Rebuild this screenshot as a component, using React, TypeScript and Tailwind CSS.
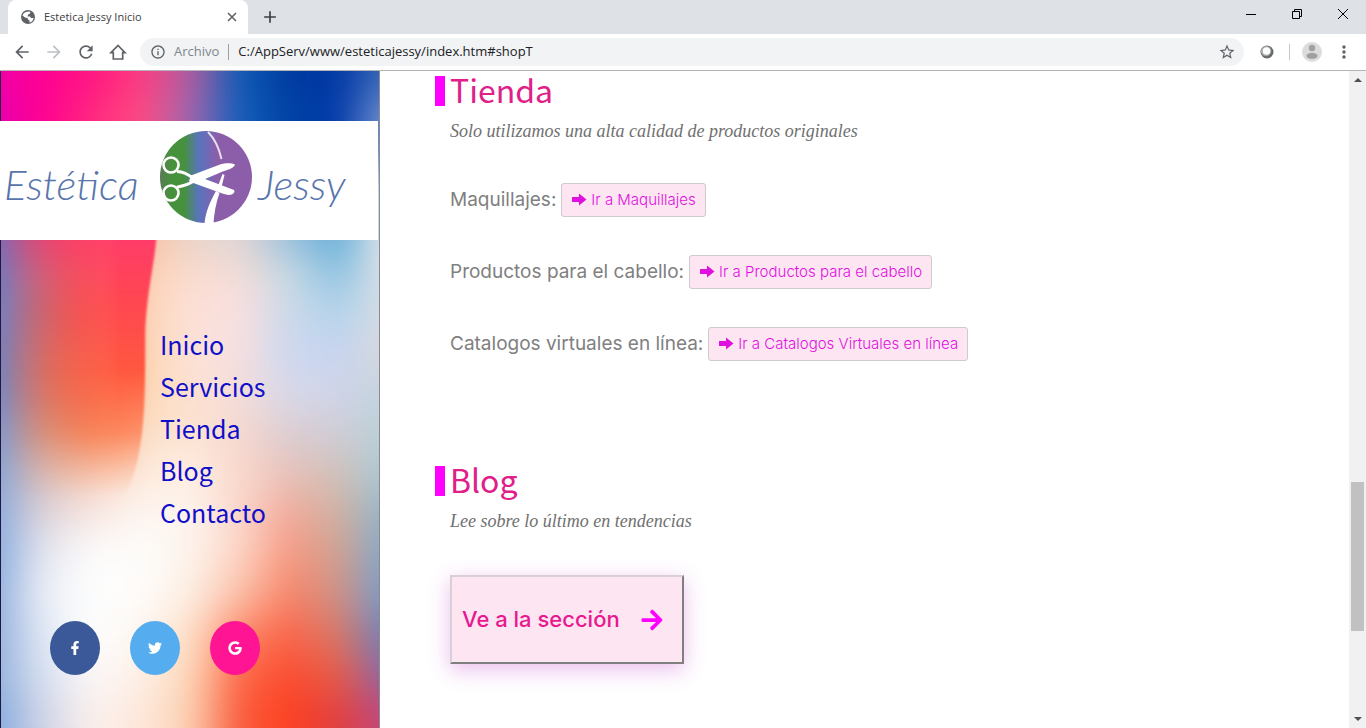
import type { ReactNode } from "react";
import {
  MdAdd,
  MdArrowBack,
  MdArrowForward,
  MdClose,
  MdInfoOutline,
  MdMoreVert,
  MdRefresh,
  MdStarBorder,
} from "react-icons/md";
import { FaArrowRight, FaFacebookF, FaGoogle, FaTwitter } from "react-icons/fa";

const heading = "font-['Noto_Sans_CJK_SC','Noto_Sans',sans-serif]";
const script = "font-['Liberation_Serif',serif] italic";

/* Horizontal colour bands, blended into each other by the blur filter. */
const bands: [number, number, string][] = [
  [-60, 85, "f000a8 ff0094 ff1480 ff3c80 b060a0 0c5cb8 003a9e 0036a4 3a6cb8"],
  [25, 70, "e400b4 ff0090 ff2a80 ff4c80 a068b0 1460bc 0042a4 0038a8 7c98d4"],
  [95, 90, "7a6ab8 d84a78 ff4060 fdc0a0 e8d4c8 e0d6d6 9cc0dc 60acd8 e8e8ea"],
  [185, 40, "7078c0 b87088 e8605c fdd0b0 fbdcd0 f4dcd8 c8dae4 90c4e2 e0e2e8"],
  [225, 40, "7480c4 b07484 e8604c fdd5b4 fce0d8 fae0e0 ccd8ea b4d4ec d8dce4"],
  [265, 40, "7080c0 c07878 e87058 fdd5b0 fde2d8 f6dfe0 ccd8f0 c8d4f0 d8d8dc"],
  [305, 40, "7088c8 c88078 ee7858 fdd8b4 fde2d0 f4dcd8 d8d8e8 d0d4e8 c0d4dc"],
  [345, 40, "7c98d0 cc9c90 f09870 fbe0c8 fde4d4 f6d8d0 dcccd0 d0ccd4 b8d0d8"],
  [385, 40, "84a4d8 d8bcb8 f8ccb8 fdeadc fef0e4 fbd8cc e8c0b8 d0c0b8 a8c8d4"],
  [425, 40, "88a8dc dcd4dc f8e8e4 fdf6f2 fdf4ee fbd8cc f4a898 d0b0a0 90b4cc"],
  [465, 40, "84a8dc e4e6f0 fdfcfc fdfdfb fdf4ec fcd4c4 f89880 d0a090 80a8cc"],
  [505, 40, "8cacdc eceef6 fefefe fefcfa fdeee2 fbc0a8 f88468 d09084 749ccc"],
  [545, 40, "90acdc e0e8f4 fefefe fdf6f0 fde0c8 fc8868 fc6448 d87868 6c80bc"],
  [585, 40, "90b0dc d8e0f0 fcf8f8 fdf0e8 fdd8b8 fc6848 fb4c30 e85c48 8868ac"],
  [625, 120, "80a8dc d0d4e8 fbf0ec fde8dc fcd0b0 f85c3c ff4020 e04040 c04880"],
];

function Wallpaper() {
  return (
    <svg
      className="absolute inset-0 size-full"
      viewBox="0 0 380 658"
      preserveAspectRatio="none"
      aria-hidden="true"
    >
      <defs>
        {bands.map(([y, , colours]) => (
          <linearGradient key={y} id={`band${y}`} gradientUnits="userSpaceOnUse" x1="-8" x2="388" y1="0" y2="0">
            {colours.split(" ").map((c, i) => (
              <stop key={i} offset={i / 8} stopColor={`#${c}`} />
            ))}
          </linearGradient>
        ))}
        <filter
          id="blend"
          filterUnits="userSpaceOnUse"
          x="-60"
          y="-60"
          width="500"
          height="800"
          colorInterpolationFilters="sRGB"
        >
          <feGaussianBlur stdDeviation="15 18" />
        </filter>
        <linearGradient id="flame" gradientUnits="userSpaceOnUse" x1="0" x2="0" y1="170" y2="430">
          <stop offset="0" stopColor="#ff3c68" />
          <stop offset="0.25" stopColor="#ff4850" />
          <stop offset="0.5" stopColor="#ff5840" />
          <stop offset="0.75" stopColor="#ff6c3c" />
          <stop offset="1" stopColor="#fba070" />
        </linearGradient>
        <linearGradient id="fadeX" x1="0" x2="1" y1="0" y2="0">
          <stop offset="0.03" stopColor="#000" />
          <stop offset="0.7" stopColor="#fff" />
        </linearGradient>
        <linearGradient id="fadeY" gradientUnits="userSpaceOnUse" x1="0" x2="0" y1="300" y2="425">
          <stop offset="0" stopColor="#000" stopOpacity="0" />
          <stop offset="0.5" stopColor="#000" stopOpacity="0.35" />
          <stop offset="1" stopColor="#000" />
        </linearGradient>
        <mask id="fade" maskUnits="userSpaceOnUse" x="0" y="110" width="170" height="340">
          <rect x="0" y="110" width="170" height="340" fill="url(#fadeX)" />
          <rect x="0" y="110" width="170" height="340" fill="url(#fadeY)" />
        </mask>
        <filter id="soft" x="-10%" width="120%" colorInterpolationFilters="sRGB">
          <feGaussianBlur stdDeviation="1" />
        </filter>
      </defs>
      <g filter="url(#blend)">
        {bands.map(([y, h]) => (
          <rect key={y} x="-60" y={y} width="500" height={h + 1} fill={`url(#band${y})`} />
        ))}
      </g>
      <g mask="url(#fade)">
        <path
          d="M-20 100H158L156 170C153 200 146 225 145 265C145 310 145 345 140 375C136 400 130 415 118 440H-20Z"
          fill="url(#flame)"
          filter="url(#soft)"
        />
      </g>
    </svg>
  );
}

function LogoMark() {
  return (
    <svg className="h-24 w-24 shrink-0" viewBox="0 0 96 96" aria-hidden="true">
      <defs>
        <linearGradient id="logoFill" x1="0" x2="1" y1="0" y2="0">
          <stop offset="0" stopColor="#5a7a58" />
          <stop offset="0.12" stopColor="#46923c" />
          <stop offset="0.26" stopColor="#46923c" />
          <stop offset="0.42" stopColor="#5874bc" />
          <stop offset="0.5" stopColor="#6a6cb8" />
          <stop offset="0.62" stopColor="#8c5eaa" />
        </linearGradient>
      </defs>
      <circle cx="48" cy="48" r="46" fill="url(#logoFill)" />
      <g fill="none" stroke="#fff">
        <path d="M50 3C57 10 61 19 63.5 30" strokeWidth="2" strokeOpacity="0.8" />
        <circle cx="13" cy="36" r="7.5" strokeWidth="2.6" />
        <circle cx="13" cy="64" r="7.5" strokeWidth="2.6" />
        <path d="M19 42.5C25 43 28 44 35 49M19 58C25 57 28 57 36 52" strokeWidth="3" />
      </g>
      <path d="M33 46.5L62 35.5C67 34 73 33.5 77 35.5C76 39 71 40.5 66 42L47 50L37 54L31 52Z" fill="#fff" />
      <path d="M35 49L47 50L76 61C77.500 63 75 66 71 66C67 65.500 63 64 60 63L34 53.500Z" fill="#fff" />
      <path d="M64.500 45L66.500 46L63.500 58L60 57Z" fill="#fff" />
      <path d="M58 62L61.500 64C58 74 56 84 55.500 95H46.500C47.500 82 53 71 58 62Z" fill="#fff" />
    </svg>
  );
}

function BlockArrow() {
  return (
    <svg className="h-4 w-4" viewBox="0 0 16 16" fill="currentColor" aria-hidden="true">
      <path d="M1 5H8V1.500L15.500 7.500L8 13.500V10H1Z" />
    </svg>
  );
}

function BrowserChrome() {
  return (
    <header className="shrink-0 border-b border-[#b4b4b6] bg-white font-['Open_Sans',sans-serif] text-[#5f6368]">
      <div className="flex h-[34px] bg-[#dee1e6]">
        <div className="ml-2 flex w-60 items-center rounded-t-lg bg-white pr-2 pl-3 text-[#3c4043]">
          <svg className="mr-2 size-4 text-[#5f6368]" viewBox="0 0 16 16" aria-hidden="true">
            <circle cx="8" cy="8" r="7" fill="currentColor" />
            <path d="M8.5 2.5L10.5 3L9.5 5L8 5.5L7.5 7.5H10L11 9H13.5C13.3 11.5 11.8 13 9.5 13.6V11.5L8 10.5L7.5 9L5 8.5L2.6 6.5C3 4.5 5 2.8 8.5 2.5Z" fill="#fff" />
          </svg>
          <span className="flex-1 text-[11px]">Estetica Jessy Inicio</span>
          <button aria-label="Cerrar pestaña" className="text-[#5f6368]">
            <svg className="size-4" viewBox="0 0 16 16" stroke="currentColor" strokeWidth="1.6">
              <path d="M4 4L12 12M12 4L4 12" />
            </svg>
          </button>
        </div>
        <button aria-label="Nueva pestaña" className="ml-3 text-[#3c4043]">
          <MdAdd className="size-5" />
        </button>
        <div className="ml-auto flex h-7 items-center gap-9 pr-[18px] text-black">
          <button aria-label="Minimizar">
            <svg className="size-[10px]" viewBox="0 0 10 10" stroke="currentColor"><path d="M0 5.5H10" /></svg>
          </button>
          <button aria-label="Restaurar">
            <svg className="size-[10px]" viewBox="0 0 10 10" fill="none" stroke="currentColor">
              <path d="M.5 2.5H7.5V9.5H.5ZM2.5 2.5V.5H9.5V7.5H7.5" />
            </svg>
          </button>
          <button aria-label="Cerrar">
            <svg className="size-[10px]" viewBox="0 0 10 10" stroke="currentColor"><path d="M0 0L10 10M10 0L0 10" /></svg>
          </button>
        </div>
      </div>
      <div className="flex h-9 items-center">
        <div className="flex w-[140px] items-center gap-3 pl-3">
          <button aria-label="Atrás"><MdArrowBack className="size-5" /></button>
          <button aria-label="Adelante" className="text-[#bdc1c6]"><MdArrowForward className="size-5" /></button>
          <button aria-label="Recargar"><MdRefresh className="size-5" /></button>
          <button aria-label="Página principal">
            <svg className="size-5" viewBox="0 0 20 20" fill="none" stroke="currentColor" strokeWidth="1.7">
              <path d="M3 10.6L10 3.4L17 10.6H14.7V17H5.3V10.6Z" />
            </svg>
          </button>
        </div>
        <div className="flex h-7 flex-1 items-center rounded-full bg-[#f1f3f4] pr-2 pl-[10px] text-[13px]">
          <MdInfoOutline className="size-4" />
          <span className="ml-2 text-[#80868b]">Archivo</span>
          <span className="mx-[9px] h-4 w-px bg-[#9aa0a6]" />
          <input
            aria-label="Dirección"
            className="min-w-0 flex-1 bg-transparent text-[#202124] outline-none"
            defaultValue="C:/AppServ/www/esteticajessy/index.htm#shopT"
          />
          <button aria-label="Añadir a marcadores"><MdStarBorder className="size-[18px]" /></button>
        </div>
        <div className="flex items-center pr-3">
          <button aria-label="Extensión" className="ml-4">
            <svg className="size-[14px]" viewBox="0 0 14 14">
              <circle cx="7" cy="7" r="6.5" fill="#66696c" />
              <circle cx="6" cy="6" r="5.3" fill="#a3a5a6" />
              <circle cx="6.5" cy="6" r="3.8" fill="#fff" />
            </svg>
          </button>
          <span className="ml-[15px] h-4 w-px bg-[#c4c7ca]" />
          <button aria-label="Perfil" className="ml-3">
            <svg className="size-5" viewBox="0 0 20 20">
              <circle cx="10" cy="10" r="10" fill="#dcdcdc" />
              <circle cx="10" cy="6" r="3.2" fill="#a0a0a0" />
              <ellipse cx="10" cy="13.8" rx="5.6" ry="3" fill="#a0a0a0" />
            </svg>
          </button>
          <button aria-label="Menú" className="ml-3"><MdMoreVert className="size-5" /></button>
        </div>
      </div>
    </header>
  );
}

const social = [
  { label: "Facebook", colour: "bg-[#3b5998]", icon: <FaFacebookF /> },
  { label: "Twitter", colour: "bg-[#55acee]", icon: <FaTwitter /> },
  { label: "Google", colour: "bg-[#ff1493]", icon: <FaGoogle /> },
];

function Sidebar() {
  return (
    <aside className="relative w-[380px] shrink-0 border-r border-l border-r-[#8a8a94] border-l-[#201840]">
      <Wallpaper />
      <div className="relative pt-[50px]">
        <div className="mr-px -ml-px flex h-[119px] items-center bg-white pb-2 font-['Lato',sans-serif] text-[42px] font-light text-[#5874ac] italic">
          <span className="w-[158px] pt-4 pl-1">Estética</span>
          <LogoMark />
          <span className="pt-4 pl-1">Jessy</span>
        </div>
        <nav className={`mt-[83px] pl-[159px] text-[25px] leading-[42px] text-[#1010c8] ${heading}`}>
          {["Inicio", "Servicios", "Tienda", "Blog", "Contacto"].map((item) => (
            <a key={item} href={`#${item.toLowerCase()}`} className="block">{item}</a>
          ))}
        </nav>
        <div className="mt-[88px] flex gap-[30px] pl-[49px]">
          {social.map(({ label, colour, icon }) => (
            <a
              key={label}
              href={`#${label.toLowerCase()}`}
              aria-label={label}
              className={`flex h-[54px] w-[50px] items-center justify-center rounded-[50%] text-sm text-white ${colour}`}
            >
              {icon}
            </a>
          ))}
        </div>
      </div>
    </aside>
  );
}

function SectionTitle({ title, children }: { title: string; children: ReactNode }) {
  return (
    <>
      <div className="flex h-10 items-center gap-[5px]">
        <span className="h-[30px] w-[10px] bg-[#ff00ff]" />
        <h2 className={`self-start text-[32px] leading-9 text-[#e02088] ${heading}`}>{title}</h2>
      </div>
      <p className={`pl-[15px] text-lg leading-10 text-[#707070] ${script}`}>{children}</p>
    </>
  );
}

const shop = [
  { label: "Maquillajes:", action: "Ir a Maquillajes" },
  { label: "Productos para el cabello:", action: "Ir a Productos para el cabello" },
  { label: "Catalogos virtuales en línea:", action: "Ir a Catalogos Virtuales en línea" },
];

export default function App() {
  return (
    <div className="flex h-screen flex-col overflow-hidden bg-white">
      <BrowserChrome />
      <div className="flex min-h-0 flex-1">
        <Sidebar />
        <main className="min-w-0 flex-1 pl-[55px] font-['Inter',sans-serif]">
          <section>
            <SectionTitle title="Tienda">Solo utilizamos una alta calidad de productos originales</SectionTitle>
            <div className="mt-8 flex flex-col gap-[38px] pl-[15px]">
              {shop.map(({ label, action }) => (
                <div key={label} className="flex items-center gap-[5px] text-[19px] text-[#808080]">
                  <span>{label}</span>
                  <button className="flex h-[34px] items-center gap-1 rounded-[3px] border border-[#ccc] bg-[#fde6f2] px-[9px] text-[15px] font-light text-[#e010e0]">
                    <BlockArrow />
                    {action}
                  </button>
                </div>
              ))}
            </div>
          </section>
          <section className="mt-[100px]">
            <SectionTitle title="Blog">Lee sobre lo último en tendencias</SectionTitle>
            <button className="mt-[34px] ml-[15px] flex h-[89px] w-[234px] items-center justify-between border-2 border-t-[#d8d0d4] border-r-[#808080] border-b-[#808080] border-l-[#d8d0d4] bg-[#fde6f2] pr-[18px] pl-[10px] text-[22px] font-medium text-[#e81890] shadow-[0_6px_20px_rgba(190,40,200,0.3)]">
              Ve a la sección
              <FaArrowRight className="size-6 text-[#ff00ff]" />
            </button>
          </section>
        </main>
        <div className="flex w-[17px] shrink-0 flex-col items-center bg-[#f1f1f1]" aria-hidden="true">
          <svg className="h-[17px] w-2" viewBox="0 0 8 17"><path d="M0 11L4 7L8 11Z" fill="#505050" /></svg>
          <div className="flex-[394]" />
          <div className="w-[13px] flex-[149] bg-[#c1c1c1]" />
          <div className="flex-[80]" />
          <svg className="h-[17px] w-2" viewBox="0 0 8 17"><path d="M0 6L4 10L8 6Z" fill="#505050" /></svg>
        </div>
      </div>
    </div>
  );
}
